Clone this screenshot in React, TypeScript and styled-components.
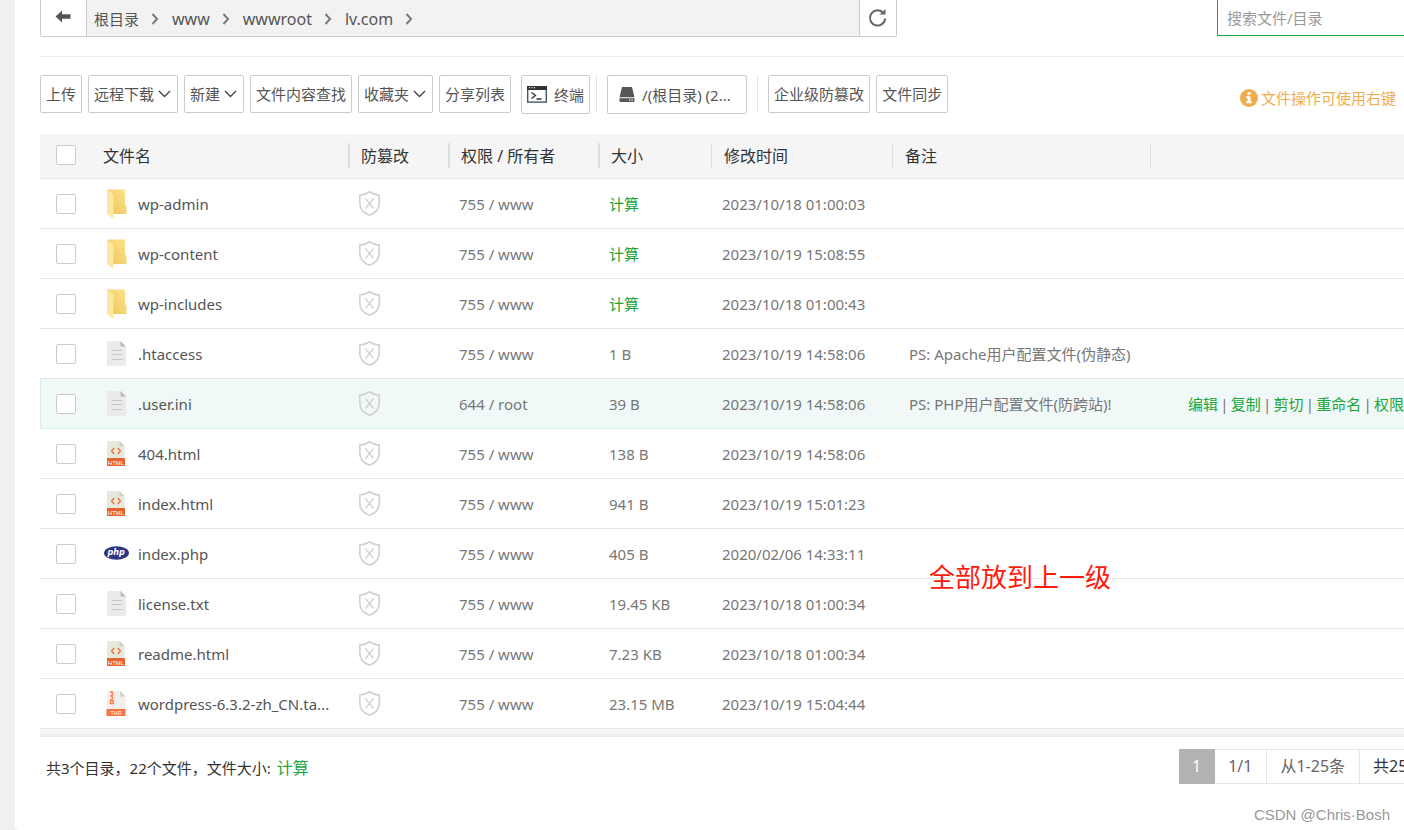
import React from "react";
import styled, { createGlobalStyle, css } from "styled-components";

const GlobalStyle = createGlobalStyle`
  * { box-sizing: border-box; }
  body {
    margin: 0;
    background: #f0f0f0;
    color: #555;
    font-family: "Noto Sans", "Noto Sans CJK SC", sans-serif;
    font-size: 15px;
    line-height: 20px;
    overflow-x: hidden;
  }
  button, input { font: inherit; color: inherit; }
  a { text-decoration: none; }
`;

const Panel = styled.main`
  position: relative;
  min-height: 100vh;
  margin-left: 15px;
  padding-left: 25px;
  background: #fff;
  border-bottom-left-radius: 4px;
  overflow: hidden;
`;

const TopBar = styled.header`
  display: flex;
  justify-content: space-between;
  align-items: flex-start;
  height: 57px;
  border-bottom: 1px solid #ececec;
`;

const PathBar = styled.nav`
  display: flex;
  flex: 0 1 857px;
  height: 37px;
  border: 1px solid #ccc;
  border-top: 0;
  border-radius: 0 0 2px 2px;
  background: #f2f2f2;
`;

const PathButton = styled.button<{ $side: "left" | "right" }>`
  display: flex;
  align-items: center;
  justify-content: center;
  width: ${(p) => (p.$side === "left" ? 46 : 37)}px;
  padding: 0 1px 1px 0;
  background: #fff;
  border: 0 solid #ccc;
  ${(p) => (p.$side === "left" ? "border-right-width: 1px;" : "border-left-width: 1px;")}
`;

const Crumbs = styled.ol`
  display: flex;
  flex: 1;
  align-items: center;
  margin: 0;
  padding: 1px 0 0 7px;
  list-style: none;
`;

const Crumb = styled.li`
  display: flex;
  align-items: center;
  svg { margin: 0 13px 0 12px; }
`;

const CrumbLink = styled.a<{ $latin?: boolean }>`
  color: #555;
  font-size: ${(p) => (p.$latin ? 16 : 15)}px;
`;

const SearchInput = styled.input`
  flex: 0 0 187px;
  min-width: 0;
  height: 36px;
  padding: 0 9px;
  border: 1px solid #20a53a;
  border-width: 0 0 1px 1px;
  border-radius: 0;
  outline: 0;
  background: #fff;
  &::placeholder { color: #999; opacity: 1; }
`;

const Toolbar = styled.div`
  display: flex;
  align-items: flex-start;
  padding: 18px 8px 13px 0;
`;

const ButtonGroup = styled.div`
  display: flex;
  gap: 6px;
`;

const ToolButton = styled.button<{ $tall?: boolean; $wide?: boolean }>`
  display: flex;
  align-items: center;
  height: ${(p) => (p.$tall ? 39 : 38)}px;
  width: ${(p) => (p.$wide ? "140px" : "auto")};
  padding: 0 ${(p) => (p.$wide ? 11 : 5)}px;
  border: 1px solid #ccc;
  border-radius: 2px;
  background: #fff;
  white-space: nowrap;
  svg { flex: none; }
`;

const Caret = styled.svg`
  margin: 0 1px 0 4px;
`;

const LeadIcon = styled.span`
  display: flex;
  margin-right: 7px;
`;

const Divider = styled.span`
  width: 1px;
  height: 38px;
  margin: 0 10px;
  background: #e6e6e6;
`;

const TerminalSlot = styled.div`
  display: flex;
  margin: 0 -4px 0 10px;
`;

const Hint = styled.p`
  display: flex;
  align-items: center;
  gap: 3px;
  margin: 0 0 0 auto;
  line-height: 46px;
  color: #f0ad4e;
  white-space: nowrap;
`;

const FileTable = styled.table`
  width: 100%;
  table-layout: fixed;
  border-collapse: separate;
  border-spacing: 0;
`;

const Th = styled.th`
  height: 45px;
  padding: 0 0 2px;
  border-bottom: 1px solid #e6e6e6;
  background: #f5f5f5;
  color: #333;
  font-size: 16px;
  font-weight: 400;
  text-align: left;
`;

const HeadLabel = styled.div<{ $bar: 0 | 1 | 2 }>`
  height: 25px;
  padding-left: ${(p) => (p.$bar === 0 ? 10 : p.$bar === 1 ? 12 : 11)}px;
  border-left: ${(p) => p.$bar}px solid #dfdfdf;
  line-height: 26px;
`;

const Td = styled.td<{ $pad?: number; $strong?: boolean }>`
  height: 50px;
  padding: 0 0 0 ${(p) => p.$pad ?? 11}px;
  border-bottom: 1px solid #e6e6e6;
  color: ${(p) => (p.$strong ? "#555" : "#777")};
  white-space: nowrap;
  overflow: hidden;
`;

const Row = styled.tr<{ $active?: boolean }>`
  ${(p) =>
    p.$active &&
    css`
      ${Td} {
        background: #f0f8f8;
        border-bottom-color: #d9efea;
      }
      ${Td}:first-child { box-shadow: inset 1px 0 #d9efea; }
    `}
`;

const CheckBox = styled.input`
  appearance: none;
  display: block;
  width: 20px;
  height: 20px;
  margin: 0 0 0 16px;
  border: 1px solid #ccc;
  border-radius: 2px;
  background: #fff;
`;

const NameCell = styled.div`
  display: flex;
  align-items: center;
  gap: 10px;
`;

const IconSlot = styled.span`
  display: flex;
  justify-content: center;
  width: 24px;
  svg { flex: none; }
`;

const GreenLink = styled.a`
  color: #20a53a;
`;

const Actions = styled.div`
  display: flex;
`;

const ActionBar = styled.span`
  width: 13px;
  text-align: center;
  color: #777;
`;

const TableShade = styled.div`
  height: 8px;
  background: linear-gradient(#fafafa, #ebebeb);
`;

const Footer = styled.footer`
  display: flex;
  justify-content: space-between;
  align-items: flex-start;
  padding-top: 12px;
`;

const Summary = styled.p`
  margin: 9px 0 0 6px;
  color: #333;
  a { margin-left: 6px; font-size: 16px; }
`;

const Pager = styled.div`
  display: flex;
  flex: 0 0 225px;
  overflow: hidden;
  white-space: nowrap;
  font-size: 16px;
`;

const PageItem = styled.span<{ $current?: boolean; $dark?: boolean }>`
  flex: none;
  height: 35px;
  padding: 0 ${(p) => (p.$current ? 13 : 14)}px 0 13px;
  border: 1px solid #e6e6e6;
  border-left-width: 0;
  line-height: 32px;
  color: ${(p) => (p.$dark ? "#333" : "#666")};
  ${(p) => p.$current && "background: #b3b3b3; border-color: #b3b3b3; color: #fff;"}
`;

const Annotation = styled.p`
  position: absolute;
  left: 914px;
  top: 560px;
  margin: 0;
  color: #ff1a0d;
  font-size: 26px;
  line-height: 34px;
`;

const Watermark = styled.p`
  position: absolute;
  right: 14px;
  bottom: 5px;
  margin: 0;
  color: #999;
  font-family: "Liberation Sans", sans-serif;
  font-size: 15px;
`;

const ChevronDown = () => (
  <Caret width="13" height="8" viewBox="0 0 13 8" fill="none" stroke="#444" strokeWidth="1.4">
    <path d="M1 1l5.500 5.500L12 1" />
  </Caret>
);

const ChevronRight = () => (
  <svg width="8" height="12" viewBox="0 0 8 12" fill="none" stroke="#777" strokeWidth="1.900">
    <path d="M1.500 1l4.600 5L1.500 11" />
  </svg>
);

const BackIcon = () => (
  <svg width="16" height="15" viewBox="0 0 16 15" fill="#555">
    <path d="M0.500 6.500L7 0.500V4.300H15.500V8.700H7V12.500Z" />
  </svg>
);

const RefreshIcon = () => (
  <svg width="20" height="20" viewBox="0 0 20 20" fill="none" stroke="#666" strokeWidth="2">
    <path d="M17.200 10.500a7.600 7.600 0 1 1-2.600-6.300" />
    <path d="M11.500 6.500h6V1z" fill="#666" stroke="none" />
  </svg>
);

const TerminalIcon = () => (
  <svg width="20" height="17" viewBox="0 0 20 17" fill="none">
    <rect x="0.700" y="0.700" width="18.600" height="15.400" stroke="#47576a" strokeWidth="1.400" />
    <rect width="20" height="4" fill="#333" />
    <path d="M2 1.700h1.200M4.500 1.700h1.200M7 1.700h1.200" stroke="#fff" />
    <path d="M4.500 6.500l4 3-4 3M9.500 13h5" stroke="#333" strokeWidth="1.300" />
  </svg>
);

const DriveIcon = () => (
  <svg width="16" height="16" viewBox="0 0 16 16" fill="#555">
    <path d="M3 0h10l2.500 10.200H0.500Z" />
    <path d="M0.500 11.200h15V14a1 1 0 0 1-1 1h-13a1 1 0 0 1-1-1Z" />
    <path d="M10 13.200h1.300M12.500 13.200h1.300" stroke="#fff" strokeWidth="1.200" />
  </svg>
);

const InfoIcon = () => (
  <svg width="18" height="18" viewBox="0 0 18 18">
    <circle cx="9" cy="9" r="9" fill="#f0ad4e" />
    <path d="M7.500 3.300h3v2.500h-3zM6.200 7.200h4.300v5h1.400v2H6.200v-2h1.400v-3H6.200z" fill="#fff" />
  </svg>
);

const ShieldIcon = () => (
  <svg width="24" height="26" viewBox="-0.500 0.500 24 26" fill="none" stroke="#d2d2d2">
    <path
      d="M11 1.200C8.300 3.200 5 4.300 1.300 4.600V12.500c0 5.800 3.700 10.100 9.700 12.200 6-2.100 9.700-6.400 9.700-12.200V4.600C17 4.300 13.700 3.200 11 1.200Z"
      strokeWidth="1.700"
    />
    <path d="M7 8l8 10M15 8L7 18" strokeWidth="1.300" />
  </svg>
);

const FolderIcon = () => (
  <svg width="22" height="30" viewBox="-1 0 22 30">
    <defs>
      <linearGradient id="folderBack" x1="0" y1="1" x2="1" y2="0">
        <stop offset="0" stopColor="#ecc35c" />
        <stop offset="1" stopColor="#ffe38a" />
      </linearGradient>
    </defs>
    <path d="M1 0.500h18v14.500l1.500 2V25H1z" fill="url(#folderBack)" />
    <path d="M1 0.500l6.500 5V30L1 25z" fill="#ffe79f" />
  </svg>
);

const TextIcon = () => (
  <svg width="20" height="26" viewBox="-0.500 0.500 20 26">
    <path d="M1.500 0.500H14l5.500 5.500v18a1.500 1.500 0 0 1-1.500 1.500H2A1.500 1.500 0 0 1 0.500 24V1.500a1 1 0 0 1 1-1Z" fill="#ebebeb" />
    <path d="M14 0.500l5.500 5.500H14z" fill="#bbb" />
    <path d="M5 10h11M5 14h11M5 19h11" stroke="#c8c8c8" />
  </svg>
);

const HtmlIcon = () => (
  <svg width="20" height="26" viewBox="0 0.500 20 26">
    <path d="M1 0.500h12.500l5 5V18H1z" fill="#e8e8df" />
    <path d="M13.500 0.500l5 5h-5z" fill="#cfcfc0" />
    <path d="M8.300 7.500L5.500 10.500l2.800 3M11.700 7.500l2.800 3-2.800 3" fill="none" stroke="#f0703c" strokeWidth="1.300" />
    <rect x="1" y="17.500" width="18" height="8" fill="#e8622c" />
    <text x="10" y="24" fontSize="6" textAnchor="middle" fill="#fff" fontFamily="Liberation Sans">HTML</text>
  </svg>
);

const TarIcon = () => (
  <svg width="20" height="26" viewBox="0 0.500 20 26">
    <path d="M1 0.500h13l5.500 5.500v13H1z" fill="#f4efed" />
    <path d="M14 0.500l5.500 5.500H14z" fill="#d3d2c3" />
    <path d="M4 1.500h3M5.500 3.500h2M4 5.500h3M5.500 7.500h2M4 9.500h3" stroke="#ff7442" strokeWidth="1.300" />
    <path d="M4.500 9.500v3.500h2.700v-3.500" fill="none" stroke="#ff7442" strokeWidth="1.300" />
    <rect x="0.500" y="18.500" width="19" height="7" fill="#fb7040" />
    <text x="10" y="24.300" fontSize="6" textAnchor="middle" fill="#fff" fontFamily="Liberation Sans">TAR</text>
  </svg>
);

const PhpIcon = () => (
  <svg width="26" height="16" viewBox="-0.500 0.500 26 16">
    <ellipse cx="13" cy="7.500" rx="12.500" ry="6.700" fill="#2e3583" />
    <text x="12.700" y="9.700" fontSize="8" fontWeight="700" fontStyle="italic" textAnchor="middle" fill="#fff" fontFamily="DejaVu Sans">php</text>
  </svg>
);

const icons = {
  folder: FolderIcon,
  text: TextIcon,
  html: HtmlIcon,
  php: PhpIcon,
  tar: TarIcon,
};

type FileEntry = {
  name: string;
  kind: keyof typeof icons;
  owner?: string;
  size?: string;
  time: string;
  note?: string;
  active?: boolean;
};

const files: FileEntry[] = [
  { name: "wp-admin", kind: "folder", time: "2023/10/18 01:00:03" },
  { name: "wp-content", kind: "folder", time: "2023/10/19 15:08:55" },
  { name: "wp-includes", kind: "folder", time: "2023/10/18 01:00:43" },
  { name: ".htaccess", kind: "text", size: "1 B", time: "2023/10/19 14:58:06", note: "PS: Apache用户配置文件(伪静态)" },
  { name: ".user.ini", kind: "text", owner: "644 / root", size: "39 B", time: "2023/10/19 14:58:06", note: "PS: PHP用户配置文件(防跨站)!", active: true },
  { name: "404.html", kind: "html", size: "138 B", time: "2023/10/19 14:58:06" },
  { name: "index.html", kind: "html", size: "941 B", time: "2023/10/19 15:01:23" },
  { name: "index.php", kind: "php", size: "405 B", time: "2020/02/06 14:33:11" },
  { name: "license.txt", kind: "text", size: "19.45 KB", time: "2023/10/18 01:00:34" },
  { name: "readme.html", kind: "html", size: "7.23 KB", time: "2023/10/18 01:00:34" },
  { name: "wordpress-6.3.2-zh_CN.ta...", kind: "tar", size: "23.15 MB", time: "2023/10/19 15:04:44" },
];

const crumbs = ["根目录", "www", "wwwroot", "lv.com"];
const actions = ["编辑", "复制", "剪切", "重命名", "权限"];

const headings: { label: string; bar: 0 | 1 | 2 }[] = [
  { label: "文件名", bar: 0 },
  { label: "防篡改", bar: 2 },
  { label: "权限 / 所有者", bar: 2 },
  { label: "大小", bar: 2 },
  { label: "修改时间", bar: 1 },
  { label: "备注", bar: 1 },
  { label: "", bar: 1 },
];

const columnWidths = [53, 255, 100, 150, 113, 181, 258];

const FileRow = ({ file }: { file: FileEntry }) => {
  const Icon = icons[file.kind];
  return (
    <Row $active={file.active}>
      <Td $pad={0}>
        <CheckBox type="checkbox" aria-label={file.name} />
      </Td>
      <Td $strong>
        <NameCell>
          <IconSlot><Icon /></IconSlot>
          {file.name}
        </NameCell>
      </Td>
      <Td $pad={10}><NameCell><ShieldIcon /></NameCell></Td>
      <Td>{file.owner ?? "755 / www"}</Td>
      <Td>{file.size ?? <GreenLink href="#size">计算</GreenLink>}</Td>
      <Td>{file.time}</Td>
      <Td $pad={17}>{file.note}</Td>
      <Td $pad={38}>
        {file.active && (
          <Actions>
            {actions.map((action, i) => (
              <React.Fragment key={action}>
                {i > 0 && <ActionBar>|</ActionBar>}
                <GreenLink href="#action">{action}</GreenLink>
              </React.Fragment>
            ))}
          </Actions>
        )}
      </Td>
    </Row>
  );
};

export default function App() {
  return (
    <>
      <GlobalStyle />
      <Panel>
        <TopBar>
          <PathBar>
            <PathButton $side="left" aria-label="返回"><BackIcon /></PathButton>
            <Crumbs>
              {crumbs.map((crumb, i) => (
                <Crumb key={crumb}>
                  <CrumbLink href="#path" $latin={i > 0}>{crumb}</CrumbLink>
                  <ChevronRight />
                </Crumb>
              ))}
            </Crumbs>
            <PathButton $side="right" aria-label="刷新"><RefreshIcon /></PathButton>
          </PathBar>
          <SearchInput placeholder="搜索文件/目录" aria-label="搜索文件/目录" />
        </TopBar>

        <Toolbar>
          <ButtonGroup>
            <ToolButton>上传</ToolButton>
            <ToolButton>远程下载<ChevronDown /></ToolButton>
            <ToolButton>新建<ChevronDown /></ToolButton>
            <ToolButton>文件内容查找</ToolButton>
            <ToolButton>收藏夹<ChevronDown /></ToolButton>
            <ToolButton>分享列表</ToolButton>
          </ButtonGroup>
          <TerminalSlot>
            <ToolButton $tall><LeadIcon><TerminalIcon /></LeadIcon>终端</ToolButton>
          </TerminalSlot>
          <Divider />
          <ToolButton $tall $wide><LeadIcon><DriveIcon /></LeadIcon>/(根目录) (2...</ToolButton>
          <Divider />
          <ButtonGroup>
            <ToolButton>企业级防篡改</ToolButton>
            <ToolButton>文件同步</ToolButton>
          </ButtonGroup>
          <Hint><InfoIcon />文件操作可使用右键</Hint>
        </Toolbar>

        <FileTable>
          <colgroup>
            {columnWidths.map((width, i) => <col key={i} width={width} />)}
            <col />
          </colgroup>
          <thead>
            <tr>
              <Th><CheckBox type="checkbox" aria-label="全选" /></Th>
              {headings.map((h, i) => (
                <Th key={i}><HeadLabel $bar={h.bar}>{h.label}</HeadLabel></Th>
              ))}
            </tr>
          </thead>
          <tbody>
            {files.map((file) => <FileRow key={file.name} file={file} />)}
          </tbody>
        </FileTable>
        <TableShade />

        <Footer>
          <Summary>
            共3个目录，22个文件，文件大小:<GreenLink href="#total">计算</GreenLink>
          </Summary>
          <Pager>
            <PageItem $current>1</PageItem>
            <PageItem>1/1</PageItem>
            <PageItem>从1-25条</PageItem>
            <PageItem $dark>共25条</PageItem>
          </Pager>
        </Footer>

        <Annotation>全部放到上一级</Annotation>
        <Watermark>CSDN @Chris·Bosh</Watermark>
      </Panel>
    </>
  );
}
